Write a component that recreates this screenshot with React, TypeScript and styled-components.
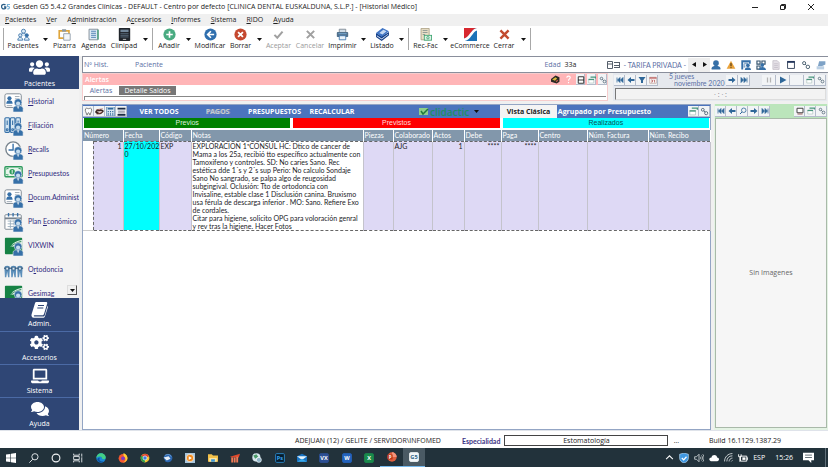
import React from "react";
import styled, { createGlobalStyle, css } from "styled-components";
import { FaUsers, FaCogs, FaLaptop, FaComments } from "react-icons/fa";

const GlobalStyle = createGlobalStyle`
  * { box-sizing: border-box; }
  body { margin: 0; background: #fff; }
  body, button, input {
    font-family: "Open Sans", "Noto Sans", sans-serif;
    font-size: 7px;
    line-height: 10px;
  }
  button { margin: 0; padding: 0; border: 0; background: none; color: inherit; white-space: nowrap; }
  svg { display: block; flex: none; }
`;

const navy = "#2f4675";
const steel = "#3670a8";
const label = "#5b70a5";
const narrow = `Lato, "Open Sans", sans-serif`;

/* ---------- layout ---------- */

const Window = styled.div`
  min-height: 100vh;
  display: flex;
  flex-direction: column;
  background: #fff;
  color: #222;
  overflow: hidden;
`;

const TitleBar = styled.header`
  height: 14px;
  display: flex;
  align-items: center;
  padding: 0 4px 0 1px;
  gap: 2px;
  white-space: nowrap;
`;

const Title = styled.h1`
  flex: 1;
  margin: 0;
  font-size: 7px;
  font-weight: 400;
  line-height: 12px;
`;

const WindowButton = styled.button`
  width: 26px;
  height: 12px;
  display: grid;
  place-items: center;
`;

const MenuBar = styled.nav`
  height: 12px;
  display: flex;
  align-items: center;
  gap: 10px;
  padding-left: 5px;
  background: #f0f0f0;
`;

const Toolbar = styled.div`
  height: 30px;
  display: flex;
  align-items: flex-start;
  padding: 2px 0 0 1px;
`;

const ToolButton = styled.button<{ $w: number }>`
  width: ${(p) => p.$w}px;
  display: flex;
  flex-direction: column;
  align-items: center;
  color: #222;
  &:disabled { color: #9a9a9a; }
`;

const ArrowButton = styled.button`
  width: 10px;
  height: 22px;
  display: grid;
  place-items: center;
`;

const Separator = styled.span`
  width: 1px;
  height: 22px;
  margin: 0 2px;
  background: #a8a8a8;
`;

const Body = styled.div`
  flex: 1;
  display: flex;
  background: #f0f0f0;
`;

const Sidebar = styled.aside`
  width: 79px;
  flex: none;
  display: flex;
  flex-direction: column;
  margin-right: 3px;
  background: #f3f3f3;
`;

const Section = styled.button`
  height: 33px;
  flex: none;
  display: flex;
  flex-direction: column;
  align-items: center;
  justify-content: center;
  gap: 1px;
  background: ${navy};
  color: #fff;
  font-size: 7px;
  & + & { border-top: 1px solid #4b6aa5; }
`;

const SideList = styled.div`
  flex: 1 1 0;
  min-height: 0;
  position: relative;
  overflow: hidden;
  display: flex;
  flex-direction: column;
`;

const SideItem = styled.a`
  height: 24px;
  flex: none;
  display: flex;
  align-items: center;
  gap: 4px;
  padding-left: 4px;
  color: #2f2a80;
  font-family: ${narrow};
  text-decoration: none;
  white-space: nowrap;
  svg { margin-top: 2px; }
`;

const ScrollDown = styled.button`
  position: absolute;
  right: 2px;
  bottom: 3px;
  width: 10px;
  height: 10px;
  display: grid;
  place-items: center;
  background: #f0f0f0;
  border: 1px solid;
  border-color: #ddd #555 #555 #ddd;
`;

const Main = styled.main`
  flex: 1;
  min-width: 0;
  display: flex;
  flex-direction: column;
`;

const PatientBar = styled.div`
  height: 17px;
  display: flex;
  align-items: center;
  padding: 0 2px 0 1px;
  background: #fff;
  border: 1px solid #8a8f9c;
  border-width: 1px 0 1px 1px;
  color: ${label};
  white-space: nowrap;
`;

const PatientId = styled.span`
  width: 51px;
`;

const Grow = styled.span`
  flex: 1;
`;

const Age = styled.span`
  margin-right: 30px;
  b { font-weight: 400; color: #222; margin-left: 2px; }
`;

const Rate = styled.span`
  margin: 0 2px 0 4px;
  font-family: ${narrow};
`;

const PatientTools = styled.div`
  display: flex;
  align-items: center;
  gap: 5px;
  margin-left: 1px;
`;

const Stepper = styled.div`
  display: flex;
  background: #eee;
  height: 14px;
  button { width: 11px; display: grid; place-items: center; }
`;

const MidRow = styled.div`
  display: flex;
  gap: 5px;
  height: 28px;
  margin-bottom: 3px;
`;

const AlertPanel = styled.section`
  flex: 1;
  display: flex;
  flex-direction: column;
  background: #fff;
  border: 1px solid #f6cccc;
`;

const AlertHead = styled.div`
  height: 11px;
  display: flex;
  align-items: center;
  gap: 2px;
  padding-left: 2px;
  background: #ffb5b7;
  color: #fff;
  font-weight: 600;
`;

const AlertTabs = styled.div`
  height: 11px;
  display: flex;
  align-items: flex-end;
`;

const AlertTab = styled.button<{ $dark?: boolean }>`
  width: ${(p) => (p.$dark ? 57 : 36)}px;
  height: 9px;
  line-height: 9px;
  color: ${(p) => (p.$dark ? "#fff" : label)};
  background: ${(p) => (p.$dark ? "#777" : "transparent")};
`;

const SunkenLine = styled.div`
  margin: 1px 1px 0;
  height: 4px;
  border: 1px solid #888;
  border-width: 1px 0 0 1px;
`;

const CalendarPanel = styled.section`
  width: 214px;
  margin-right: 1px;
  display: flex;
  flex-direction: column;
  background: #e6e9ee;
`;

const CalendarHead = styled.div`
  height: 14px;
  display: flex;
  align-items: center;
  padding: 0 1px;
`;

const DateText = styled.div`
  width: 68px;
  padding-left: 11px;
  font-family: ${narrow};
  line-height: 7px;
  color: ${label};
  white-space: nowrap;
  span { display: block; }
  span + span { padding-left: 5px; }
`;

const Gauge = styled.div`
  height: 12px;
  margin: 1px 1px 0 2px;
  border: 1px solid;
  border-color: #777 #ddd #ddd #777;
  background: #f3f3f3;
  color: #778;
  text-align: center;
  line-height: 11px;
`;

const IconButton = styled.button<{ $flat?: boolean; $w?: number }>`
  width: ${(p) => p.$w ?? 11}px;
  height: 11px;
  flex: none;
  display: grid;
  place-items: center;
  background: ${(p) => (p.$flat ? "transparent" : "#f2f4f6")};
  ${(p) =>
    !p.$flat &&
    css`
      box-shadow: inset -1px -1px #b4bccb;
    `}
`;

const Workspace = styled.div`
  flex: 1;
  display: flex;
  gap: 3px;
`;

const HistoryPanel = styled.section`
  flex: 1;
  min-width: 0;
  display: flex;
  flex-direction: column;
  background: #fff;
  border: 1px solid #93a5c4;
`;

const BlueBar = styled.div`
  height: 13px;
  flex: none;
  display: flex;
  align-items: center;
  background: #4c74bd;
  color: #fff;
  font-weight: 700;
`;

const BarAction = styled.button<{ $w: number; $dim?: boolean }>`
  width: ${(p) => p.$w}px;
  height: 12px;
  font-weight: 700;
  color: ${(p) => (p.$dim ? "#c3cad6" : "#fff")};
  ${(p) => p.$dim && "text-shadow: 1px 0 #8d98ab;"}
`;

const Clidactic = styled.button`
  width: 81px;
  height: 12px;
  display: flex;
  align-items: center;
  gap: 1px;
  margin-left: 60px;
  color: #1c8f62;
  font-size: 10px;
  line-height: 12px;
  font-weight: 600;
  svg:last-child { margin-left: 4px; }
`;

const ViewTab = styled.button<{ $active?: boolean; $w: number }>`
  width: ${(p) => p.$w}px;
  height: 13px;
  font-weight: 700;
  color: ${(p) => (p.$active ? "#222" : "#fff")};
  background: ${(p) => (p.$active ? "#f4f4f4" : "transparent")};
`;

const Bands = styled.div`
  display: grid;
  grid-template-columns: 1fr 1fr 1fr;
  gap: 3px;
  padding: 0 1px;
  margin-bottom: 2px;
`;

const Band = styled.div<{ $bg: string; $fg: string }>`
  height: 10px;
  line-height: 10px;
  text-align: center;
  font-family: "Liberation Sans", sans-serif;
  background: ${(p) => p.$bg};
  color: ${(p) => p.$fg};
`;

const Table = styled.table`
  width: 100%;
  table-layout: fixed;
  border-collapse: collapse;
  font-family: ${narrow};
`;

const Th = styled.th`
  height: 11px;
  padding: 0 0 0 1px;
  overflow: hidden;
  text-align: left;
  font-weight: 400;
  line-height: 10px;
  white-space: nowrap;
  background: #8297ab;
  color: #fff;
  border-right: 1px solid #fff;
`;

const Td = styled.td<{ $bg?: string; $right?: boolean; $plain?: boolean }>`
  height: 89px;
  padding: 0 1px;
  vertical-align: top;
  line-height: 8px;
  color: #1c1c28;
  white-space: nowrap;
  text-align: ${(p) => (p.$right ? "right" : "left")};
  background: ${(p) => p.$bg ?? "#ded9f5"};
  border-right: 1px solid #c4c3cc;
  border-top: 1px dashed #666;
  border-bottom: 1px dashed #666;
  ${(p) => p.$plain && "border-top: 0; border-right: 1px dashed #666; border-bottom: 1px solid #ccc;"}
`;

const NoteLine = styled.span`
  display: block;
`;

const ImagePanel = styled.section`
  width: 114px;
  display: flex;
  flex-direction: column;
  padding: 0 1px 2px 1px;
  background: #e4f3e4;
`;

const GreenBar = styled.div`
  height: 14px;
  display: flex;
  align-items: center;
  background: #bbe5bb;
`;

const ImageBox = styled.div`
  flex: 1;
  display: grid;
  place-items: center;
  background: #f6f6f6;
  border: 1px solid #a9b9a9;
  color: #666;
`;

const StatusBar = styled.footer`
  height: 18px;
  display: flex;
  align-items: center;
  padding: 2px 47px 0 295px;
  border-top: 1px solid #dfe3ea;
  white-space: nowrap;
`;

const SpecialtyLabel = styled.label`
  margin: 0 4px 0 21px;
  color: #3c3484;
  font-family: ${narrow};
  font-weight: 700;
`;

const SpecialtyInput = styled.input`
  flex: 0 1 164px;
  min-width: 0;
  height: 11px;
  padding: 0;
  border: 1px solid #444;
  border-radius: 0;
  text-align: center;
  color: #222;
  background: #fff;
`;

const Taskbar = styled.div`
  height: 19px;
  display: flex;
  align-items: stretch;
  background: #22323b;
  color: #fff;
`;

const Apps = styled.div`
  width: 425px;
  display: flex;
`;

const App = styled.button<{ $open?: boolean; $active?: boolean }>`
  flex: 1;
  display: grid;
  place-items: center;
  background: ${(p) => (p.$active ? "#4a5a64" : "transparent")};
  border-bottom: ${(p) => (p.$open || p.$active ? "1px solid #76b9ed" : "0")};
`;

const Tray = styled.div`
  display: flex;
  align-items: center;
  gap: 5px;
  padding-right: 2px;
`;

const Clock = styled.time`
  margin: 0 5px 0 5px;
`;

const DeskEdge = styled.span`
  width: 1px;
  height: 19px;
  margin-left: 6px;
  background: #61707a;
`;

/* ---------- icons ---------- */

type IconProps = { s?: number; children: React.ReactNode };
const Icon = ({ s = 12, children }: IconProps) => (
  <svg width={s} height={s} viewBox="0 0 16 16" fill="none" aria-hidden="true">
    {children}
  </svg>
);

const Caret = ({ color = "#111" }: { color?: string }) => (
  <svg width="5" height="3" viewBox="0 0 5 3" aria-hidden="true">
    <path d="M0 0h5L2.500 3z" fill={color} />
  </svg>
);

const SmallPerson = () => (
  <g stroke="#f3f3f3" strokeWidth=".6">
    <path d="M10 22v-4c0-2 2-3 5.500-3s5.500 1 5.500 3v4z" fill={steel} />
    <circle cx="15.500" cy="11.500" r="4.200" fill={steel} />
    <circle cx="15.500" cy="12.700" r="2.300" fill="#c5dcee" stroke="none" />
    <path d="M14.500 16l1 3 1-3z" fill="#fff" stroke="none" />
  </g>
);

const SideIcon = ({ children, bare }: { children: React.ReactNode; bare?: boolean }) => (
  <svg width="20" height="20" viewBox="0 0 22 22" fill="none" aria-hidden="true">
    {children}
    {!bare && <SmallPerson />}
  </svg>
);

const cardArt = (
  <>
    <rect x="1" y="2" width="18" height="15" rx="2" fill="#fff" stroke="#77838d" />
    <circle cx="6" cy="7" r="2.300" fill={steel} />
    <path d="M2.500 13c0-3 1.500-4 3.500-4s3.500 1 3.500 4z" fill={steel} />
    <path d="M12 5h5M12 7.500h5M3 15h6" stroke="#9aa6b0" />
  </>
);
const bindersArt = (
  <g fill="#d6e7f3" stroke={steel} strokeWidth="1.200">
    <rect x="1" y="2" width="5" height="16" rx="1" />
    <rect x="7" y="2" width="5" height="16" rx="1" />
    <rect x="13" y="2" width="5" height="16" rx="1" />
    <path d="M3.500 5v5M9.500 5v5M15.500 5v5" />
    <circle cx="3.500" cy="15" r="1" />
    <circle cx="9.500" cy="15" r="1" />
  </g>
);
const clockArt = (
  <>
    <circle cx="10" cy="10" r="8" fill="#fff" stroke="#77838d" strokeWidth="1.500" />
    <path d="M10 4v7H5" stroke={steel} strokeWidth="1.500" />
  </>
);
const cashArt = (
  <>
    <rect x="1" y="3" width="19" height="11" rx="1" fill="#e8f5ec" stroke="#2d9a5c" strokeWidth="1.500" />
    <circle cx="9" cy="8.500" r="3" fill="#2d9a5c" />
    <path d="M9 6.500v4" stroke="#fff" />
    <path d="M3 6v-1h2M18 6v-1h-2M3 11v1h2" stroke="#2d9a5c" />
  </>
);
const planArt = (
  <>
    <rect x="1" y="3" width="18" height="16" rx="1" fill="#fff" stroke="#77838d" />
    <path d="M1 7h18" stroke="#77838d" strokeWidth="2" />
    <path d="M5 1v4M10 1v4M15 1v4" stroke={steel} strokeWidth="1.500" />
    <path d="M4 10h10M4 13h7M4 16h7M7 9v9M11 9v6" stroke="#9db0bf" />
  </>
);
const greenArt = (
  <>
    <rect x="1" y="2" width="19" height="18" rx="1" fill="#168245" />
    <path d="M7 12C9 8 14 5 20 4v6z" fill="#fff" opacity=".85" />
    <path d="M5 15C8 10 12 8 19 6" stroke="#168245" />
  </>
);
const teethArt = (
  <>
    <g fill="#5c8fba">
      {[0, 7, 14].map((x) => (
        <path key={x} d={`M${x + 1} 7c1-1 4-1 5 0 1 3 0 5 0 12h-1.500l-1-6-1 6H${x + 1}c0-7-1-9 0-12z`} />
      ))}
    </g>
    <path d="M0 9h21" stroke="#2b5277" strokeWidth="1.200" />
    <path d="M2 8h3v3H2zM9 8h3v3H9zM16 8h3v3h-3z" stroke="#2b5277" fill="#dceaf5" strokeWidth=".7" />
  </>
);

const BookIcon = () => (
  <svg width="17" height="17" viewBox="0 0 17 17" fill="none" aria-hidden="true">
    <path d="M5.500 1h9.500c1 0 1.500.700 1.200 1.600L13 13c-.300.900-.900 1.300-1.800 1.300H3.500c-1 0-1 1.200 0 1.200h9c.600 0 1-.300 1.200-.900L16.500 5c.500.300.500.800.300 1.400l-2.900 9c-.300.900-1 1.400-2 1.400H3C1 17 0 15 .600 13.300L4 2.200C4.300 1.400 4.700 1 5.500 1z" fill="#fff" />
    <path d="M7 4.500h6M6.300 7h6" stroke={navy} strokeWidth="1.200" />
  </svg>
);

const toolArt: Record<string, React.ReactNode> = {
  pacientes: (
    <g fill="#dceaf5" stroke={steel}>
      <circle cx="8" cy="4" r="2.500" />
      <path d="M4.500 10c0-2 1-3.500 3.500-3.500S11.500 8 11.500 10" />
      <circle cx="4" cy="9" r="2" />
      <circle cx="12" cy="9" r="2" fill={steel} />
      <path d="M1 15c0-2 1-3.500 3-3.500S7 13 7 15zM9 15c0-2 1-3.500 3-3.500s3 1.500 3 3.500z" />
    </g>
  ),
  pizarra: (
    <>
      <path d="M1.500 3.500h12v9h-12z" fill="#fff" stroke="#e0a63c" strokeWidth="2" />
      <path d="M5 1.500h5v3H5z" fill="#8d9aa5" />
      <path d="M7 7h8v8H7z" fill="#f4f7fa" stroke="#8795a3" />
    </>
  ),
  agenda: (
    <>
      <path d="M2.500 1.500h11v13h-11z" fill="#dceaf5" stroke="#77838d" />
      <path d="M5 4h6M5 6.500h6M5 9h6M5 11.500h6" stroke={steel} />
      <path d="M13.500 2v12" stroke="#52a384" strokeWidth="2" />
    </>
  ),
  clinipad: (
    <>
      <rect x="1" y="0" width="14" height="16" rx="1" fill="#20252b" />
      <path d="M3 2h10v3H3z" fill="#72879a" />
      <path d="M3 7h10M3 9h10M3 11h10" stroke="#5f7486" />
      <path d="M6 14h4" stroke="#ddd" />
    </>
  ),
  add: (
    <>
      <circle cx="8" cy="8" r="7.500" fill="#49ab81" />
      <path d="M8 4v8M4 8h8" stroke="#fff" strokeWidth="2" />
    </>
  ),
  modify: (
    <>
      <circle cx="8" cy="8" r="7.500" fill="#2f6fae" />
      <path d="M12.500 8H5M8.500 4L4.500 8l4 4" stroke="#fff" strokeWidth="2" />
    </>
  ),
  remove: (
    <>
      <circle cx="8" cy="8" r="7.500" fill="#c5482f" />
      <path d="M5 5l6 6M11 5l-6 6" stroke="#fff" strokeWidth="2.200" />
    </>
  ),
  accept: <path d="M3 8.500l3.500 3.500L13 4.500" stroke="#a0a0a0" strokeWidth="2.500" />,
  cancel: <path d="M3.500 3.500l9 9M12.500 3.500l-9 9" stroke="#a0a0a0" strokeWidth="2.500" />,
  print: (
    <>
      <path d="M4 1.500h8V6H4z" fill="#cfdbe5" stroke="#77838d" />
      <rect x="1" y="5" width="14" height="6" rx="1" fill="#52718c" />
      <path d="M3 7h10" stroke="#7db4e0" />
      <path d="M4 9.500h8v5H4z" fill="#e9f2fa" stroke={steel} />
    </>
  ),
  list: (
    <>
      <path d="M0 6l7 4 9-5v4l-9 7-7-5z" fill="#123d86" />
      <path d="M1 9l6 4 8-6v1l-8 6-6-4z" fill="#dfe9f6" />
      <path d="M0 6l8-6 8 4-9 7z" fill="#3f74c4" />
      <path d="M4 6l5-4 4 2-5 4z" fill="#c6d9f2" />
    </>
  ),
  recfac: (
    <>
      <path d="M2.500.5h10v14h-10z" fill="#e9dfc6" stroke="#a79c80" />
      <path d="M4.500 3h6M4.500 5.500h6M4.500 8h3" stroke="#7d8c8c" />
      <rect x="6.500" y="9" width="9" height="6" fill="#dff3e8" stroke="#37a26c" />
      <circle cx="11" cy="12" r="1.500" stroke="#37a26c" />
    </>
  ),
  ecommerce: (
    <>
      <path d="M0 0h16v16H0z" fill="#1c72b8" />
      <path d="M0 0h16C8 2 8 11 0 13z" fill="#d8282f" />
      <path d="M0 13C7 11 8 2 16 0v3C10 5 9 14 1 16H0z" fill="#fff" />
    </>
  ),
  close: <path d="M3 3l10 10M13 3L3 13" stroke="#c24a2e" strokeWidth="3" />,
};

const blue = "#2f6799";
const navArt: Record<string, React.ReactNode> = {
  first: <path d="M2 3v10M8 3L3 8l5 5zM14 3L9 8l5 5z" fill={blue} stroke={blue} strokeWidth="1.500" />,
  last: <path d="M14 3v10M8 3l5 5-5 5zM2 3l5 5-5 5z" fill={blue} stroke={blue} strokeWidth="1.500" />,
  prev: <path d="M1 8l7-6v4h7v4H8v4z" fill={blue} />,
  next: <path d="M15 8L8 2v4H1v4h7v4z" fill={blue} />,
  down: <path d="M1 2h14l-5 7v5H6V9z" fill={blue} />,
  cal: (
    <>
      <path d="M1.500 2.500h13v12h-13z" fill="#fff" stroke="#a07c70" />
      <path d="M1 4h14" stroke="#b55" strokeWidth="2.500" />
      <path d="M4 8h3v4H4M9 8h2v5" stroke="#a44" strokeWidth="1.300" />
    </>
  ),
  pause: <path d="M5 3v10M11 3v10" stroke="#b4b4b4" strokeWidth="2.500" />,
  play: <path d="M2 1l13 7-13 7z" fill={blue} />,
  blank: null,
  restore: (
    <>
      <path d="M5 2h10v3" stroke="#48957c" strokeWidth="2.500" />
      <path d="M1.500 14V6.500h10V14z" fill="#fff" stroke="#9bb5ad" />
      <path d="M1 7h11" stroke="#48957c" strokeWidth="2.500" />
    </>
  ),
  link: (
    <g stroke="#536877" strokeWidth="1.600">
      <circle cx="5" cy="5" r="2.500" />
      <circle cx="11" cy="11" r="2.800" />
      <path d="M6.500 6.500L9 9" />
    </g>
  ),
  search: (
    <>
      <circle cx="9.500" cy="6.500" r="4.500" stroke={blue} strokeWidth="1.600" />
      <path d="M6 10l-4 4" stroke={blue} strokeWidth="2" />
    </>
  ),
  screen: (
    <>
      <path d="M2 2.500h12v9H2z" fill="#fff" stroke="#444" strokeWidth="2" />
      <path d="M3 14h10" stroke="#9a5e5e" strokeWidth="2" />
    </>
  ),
  split: <path d="M2.500 1.500h11v13h-11zM2 8h12" fill="#fff" stroke="#222" strokeWidth="1.800" />,
  tag: (
    <>
      <path d="M0 7l8-6 7 3v8l-5 3-10-3z" fill="#2a2a24" />
      <path d="M2 8l6-4 3 2-4 4z" fill="#d8b53c" />
      <path d="M9 12l3-3" stroke="#c4574a" strokeWidth="2" />
    </>
  ),
  tooth: <path d="M3 3c2-2 3 0 5 0s3-2 5 0c2 4-1 6-2 11-2 1-1-4-3-4s-1 5-3 4C4 9 1 7 3 3z" fill="#fff" stroke="#555" strokeWidth="1.300" />,
  mouth: (
    <>
      <path d="M0 9c3-6 5-6 8-4 3-2 5 0 8 2-3 6-12 9-16 2z" fill="#3a2724" />
      <path d="M3 8l10-1-4 4z" fill="#f3e4e0" />
      <path d="M2 5L14 3M3 13l10-4" stroke="#a04b42" />
    </>
  ),
  calc: (
    <>
      <path d="M1 0h14v16H1z" fill="#dceaf5" stroke={blue} />
      <path d="M3 3h10" stroke={blue} strokeWidth="3" />
      <path d="M4 7v8M8 7v8M12 7v8" stroke={blue} strokeWidth="2" strokeDasharray="2 1" />
    </>
  ),
  sheet: (
    <>
      <path d="M1 1h14v14H1z" fill="#e9edf2" />
      <path d="M1 3h14M1 14h14" stroke="#1c2c44" strokeWidth="3" />
      <path d="M2 7.500h12M2 10.500h12" stroke="#556" />
    </>
  ),
  user: (
    <g fill={steel}>
      <path d="M1 15v-2c0-2.500 3-3.500 7-3.500s7 1 7 3.500v2z" />
      <circle cx="8" cy="5" r="4.500" />
    </g>
  ),
  warn: (
    <>
      <path d="M8 1l7 13H1z" fill="#e9a23b" />
      <path d="M8 5v5M8 11.500v1.500" stroke="#3a2a10" strokeWidth="1.600" />
    </>
  ),
  userDoc: (
    <>
      <path d="M2 15V2h12v4" stroke={steel} strokeWidth="3" />
      <path d="M5 5h6M4 8h3M4 11h3" stroke={steel} strokeWidth="1.500" />
      <circle cx="11" cy="8.500" r="3" fill={steel} />
      <path d="M6 16c0-3 2-4.500 5-4.500s5 1.500 5 4.500z" fill={steel} />
    </>
  ),
  userQr: (
    <>
      <path d="M1.500 1.500h5v5h-5zM9.500 1.500h5v5h-5zM1.500 9.500h5v5h-5z" stroke="#33536e" strokeWidth="1.800" />
      <circle cx="10" cy="8" r="3" fill={steel} />
      <path d="M5 16c0-3 2-5 5-5s6 2 6 5z" fill={steel} />
    </>
  ),
  note: (
    <>
      <path d="M3 1h7l3 3v11H3z" fill="#e4e0e6" stroke="#b9b2bd" />
      <path d="M5 6h6M5 9h6M5 12h6" stroke="#b9b2bd" />
    </>
  ),
  win: (
    <>
      <path d="M2.500 2.500h11v11h-11z" fill="#fff" stroke="#33435c" strokeWidth="1.500" />
      <path d="M2 3h12" stroke="#22345a" strokeWidth="3" />
    </>
  ),
  card: (
    <>
      <path d="M5 2h10v5L9 10H3z" fill="#7ea2c6" />
      <path d="M1 10h12v5H1z" fill="#bcd0e4" />
    </>
  ),
  help: <path d="M5 5c0-4 7-4 6 0 0 2-3 2-3 5M8 12.500v2" stroke="#fff" strokeWidth="2" />,
};

const Nav = ({ names, w, flat, s = 8 }: { names: string[]; w?: number; flat?: boolean; s?: number }) => (
  <>
    {names.map((n, i) => (
      <IconButton key={n + i} $w={w} $flat={flat} aria-label={n}>
        <Icon s={s}>{navArt[n]}</Icon>
      </IconButton>
    ))}
  </>
);

const badge = (bg: string, text: string, fg = "#fff", edge = bg) => (
  <>
    <rect x="1" y="1" width="14" height="14" rx="1.500" fill={bg} stroke={edge} strokeWidth="1.500" />
    <text x="8" y="11.500" fontSize="9" fontWeight="700" textAnchor="middle" fill={fg}>
      {text}
    </text>
  </>
);

const apps: { name: string; art: React.ReactNode; open?: boolean; active?: boolean }[] = [
  { name: "Inicio", art: <path d="M0 2.500l7-1v6H0zM8 1.300L16 0v7.500H8zM0 8.500h7v6l-7-1zM8 8.500h8V16l-8-1.200z" fill="#fff" /> },
  {
    name: "Buscar",
    art: (
      <g stroke="#e8ecee" strokeWidth="1.500">
        <circle cx="9.500" cy="6" r="5" />
        <path d="M6 10l-5.500 5.500" />
      </g>
    ),
  },
  { name: "Cortana", art: <circle cx="8" cy="8" r="6.200" stroke="#f2f4f5" strokeWidth="1.800" /> },
  { name: "Vista de tareas", art: <path d="M1 1v2.500h9V1M1 15v-2.500h9V15M1 5.500h9v5H1zM14 1v4M14 8v7M13 6.500h2" stroke="#e8ecee" strokeWidth="1.400" /> },
  {
    name: "Edge",
    art: (
      <>
        <circle cx="8" cy="8" r="7.500" fill="#1b87d6" />
        <path d="M.500 8C1 3 4 .500 8 .500c5 0 8 4 7.500 7-.500 3-5 3-6 1C10 6 6 4 .500 8z" fill="#43cf86" />
        <path d="M6 8c-2 4 2 7 7 5-4 4-11 2-11-3 1-2 3-3 4-2z" fill="#0d52a0" />
      </>
    ),
  },
  {
    name: "Firefox",
    art: (
      <>
        <circle cx="8" cy="8.500" r="7" fill="#f4562f" />
        <path d="M9 0c5 2 7 6 6 10-1 3-4 5-7 5 4-2 5-5 3-8C9 5 8 3 9 0z" fill="#ffc934" />
        <circle cx="8" cy="8.500" r="3" fill="#7a3bc8" />
      </>
    ),
  },
  {
    name: "Chrome",
    art: (
      <>
        <circle cx="8" cy="8" r="7" fill="#f4c430" />
        <path d="M8 8L2 4.500C4 1 12 0 14.500 5z" fill="#df4334" />
        <path d="M8 8L2 4.500C-.500 9 3 15 8 15z" fill="#2ba24c" />
        <circle cx="8" cy="8" r="3.300" fill="#3d7de0" stroke="#fff" />
      </>
    ),
  },
  {
    name: "Thunderbird",
    art: (
      <>
        <path d="M1 8c0-8 13-9 14-1 0 7-7 9-11 7z" fill="#2a66b0" />
        <path d="M1 7l8-2 3 4-6 3z" fill="#e8eef6" />
        <path d="M3 4c4-3 9-2 10 2" stroke="#8cb8e6" />
      </>
    ),
  },
  {
    name: "Reproductor",
    art: (
      <>
        <path d="M0 0h16v16H0z" fill="#a8c6dd" />
        <circle cx="8" cy="8" r="6" fill="#f08a1d" stroke="#fff" />
        <path d="M6 5l5 3-5 3z" fill="#fff" />
      </>
    ),
  },
  {
    name: "Explorador",
    art: (
      <>
        <path d="M0 2h6l2 2h8v10H0z" fill="#f2c14a" />
        <path d="M2 8h12v6H2z" fill="#fbe6a2" />
        <path d="M5 10h6v4H5z" fill="#3b97d8" />
      </>
    ),
  },
  {
    name: "Clínica",
    art: (
      <>
        <path d="M0 6L16 1l-2 6H2z" fill="#e0492c" />
        <path d="M2 7h3v8H2zM6 7h3v8H6zM10 6h3v9h-3z" fill="#f07b57" />
      </>
    ),
  },
  {
    name: "Navegador",
    art: (
      <>
        <circle cx="7" cy="7" r="6.500" fill="#d7e7ee" />
        <path d="M2 4l5-2 3 4-5 3z" fill="#4b9b6a" />
        <circle cx="11" cy="11" r="4" fill="#8fb4c8" stroke="#fff" />
      </>
    ),
  },
  { name: "Photoshop", art: badge("#071c2c", "Ps", "#39a8f5", "#2b86c5") },
  {
    name: "Correo",
    art: (
      <>
        <path d="M0 5l8-4 8 4v9H0z" fill="#1673c4" />
        <path d="M0 5h16l-8 6z" fill="#e9f5fd" />
        <path d="M0 14l8-5 8 5z" fill="#37a9ec" />
      </>
    ),
  },
  { name: "VixWin", art: badge("#2d4f93", "VX") },
  { name: "Word", art: badge("#2363bd", "W") },
  { name: "Excel", art: badge("#1a8a4c", "X") },
  {
    name: "PowerPoint",
    open: true,
    art: (
      <>
        <circle cx="8" cy="8" r="7.500" fill="#e0603f" />
        <path d="M8 .500A7.500 7.500 0 0 1 15.500 8H8z" fill="#f4937a" />
        <rect x="1" y="4" width="8" height="8" fill="#b83418" />
        <text x="5" y="10.500" fontSize="7" fontWeight="700" textAnchor="middle" fill="#fff">P</text>
      </>
    ),
  },
  { name: "Gesden", active: true, art: badge("#f2f6f9", "G5", "#2c6286") },
];

const GesdenMark = () => (
  <svg width="10" height="8" viewBox="0 0 10 8" fill="none" aria-hidden="true">
    <path d="M4.500 2A2.300 2.300 0 1 0 4.700 5V4H3" stroke="#2c5f88" strokeWidth="1.300" />
    <path d="M9 1.500H6.500V3.500C9 3 9.500 6 6.200 6" stroke="#7ab3d8" strokeWidth="1.200" />
  </svg>
);

/* ---------- data ---------- */

const menus: [string, string, string][] = [
  ["", "P", "acientes"],
  ["", "V", "er"],
  ["A", "d", "ministración"],
  ["A", "c", "cesorios"],
  ["", "I", "nformes"],
  ["", "S", "istema"],
  ["", "R", "IDO"],
  ["", "A", "yuda"],
];

type Tool = { text: string; art: string; w: number; arrow?: boolean; sep?: boolean; off?: boolean };
const tools: Tool[] = [
  { text: "Pacientes", art: "pacientes", w: 34, arrow: true },
  { text: "Pizarra", art: "pizarra", w: 29 },
  { text: "Agenda", art: "agenda", w: 29 },
  { text: "Clinipad", art: "clinipad", w: 32, arrow: true, sep: true },
  { text: "Añadir", art: "add", w: 28, arrow: true },
  { text: "Modificar", art: "modify", w: 34 },
  { text: "Borrar", art: "remove", w: 27, arrow: true },
  { text: "Aceptar", art: "accept", w: 29, off: true },
  { text: "Cancelar", art: "cancel", w: 34, off: true },
  { text: "Imprimir", art: "print", w: 31, arrow: true },
  { text: "Listado", art: "list", w: 28, arrow: true, sep: true },
  { text: "Rec-Fac", art: "recfac", w: 29, arrow: true },
  { text: "eCommerce", art: "ecommerce", w: 40 },
  { text: "Cerrar", art: "close", w: 28, arrow: true, sep: true },
];

const sideItems: { t: [string, string, string]; art: React.ReactNode; bare?: boolean }[] = [
  { t: ["", "H", "istorial"], art: cardArt },
  { t: ["", "F", "iliación"], art: bindersArt },
  { t: ["", "R", "ecalls"], art: clockArt },
  { t: ["", "P", "resupuestos"], art: cashArt },
  { t: ["", "D", "ocum.Administ"], art: cardArt },
  { t: ["Plan ", "E", "conómico"], art: planArt },
  { t: ["VIXWIN", "", ""], art: greenArt },
  { t: ["O", "r", "todoncia"], art: teethArt, bare: true },
  { t: ["Gesimag", "", ""], art: greenArt },
];

const sections: [string, React.ReactNode][] = [
  ["Admin.", <BookIcon />],
  ["Accesorios", <FaCogs size={19} />],
  ["Sistema", <FaLaptop size={18} />],
  ["Ayuda", <FaComments size={18} />],
];

const columns = [10, 30, 36, 32, 172, 30, 39, 32, 37, 37, 49, 61, 62];
const headers = ["Número", "Fecha", "Código", "Notas", "Piezas", "Colaborado", "Actos", "Debe", "Paga", "Centro", "Núm. Factura", "Núm. Recibo"];

const notes = [
  "EXPLORACION 1ªCONSUL HC: Dtico de cancer de",
  "Mama a los 25a, recibió tto específico actualmente con",
  "Tamoxifeno y controles. SD: No caries Sano. Rec",
  "estética dde 1´s y 2´s sup Perio: No calculo Sondaje",
  "Sano No sangrado, se palpa algo de reugosidad",
  "subgingival. Oclusión: Tto de ortodoncia con",
  "Invisaline, estable clase 1 Disclusión canina. Bruxismo",
  "usa férula de descarga inferior . MO: Sano. Refiere Exo",
  "de cordales.",
  "Citar para higiene, solicito OPG para voloración genral",
  "y rev tras la higiene. Hacer Fotos",
];

const Accel = ({ t }: { t: [string, string, string] }) => (
  <span>
    {t[0]}
    {t[1] && <u>{t[1]}</u>}
    {t[2]}
  </span>
);

/* ---------- page ---------- */

export default function GesdenWindow() {
  return (
    <Window>
      <GlobalStyle />
      <TitleBar>
        <GesdenMark />
        <Title>Gesden G5 5.4.2 Grandes Clínicas - DEFAULT - Centro por defecto [CLINICA DENTAL EUSKALDUNA, S.L.P.] - [Historial Médico]</Title>
        <WindowButton aria-label="Minimizar">
          <svg width="6" height="6" viewBox="0 0 6 6"><path d="M0 3.500h6" stroke="#222" /></svg>
        </WindowButton>
        <WindowButton aria-label="Restaurar">
          <svg width="6" height="6" viewBox="0 0 6 6" fill="none"><path d="M.5 1.500h4v4h-4zM1.500 1V.5h4v4H5" stroke="#222" /></svg>
        </WindowButton>
        <WindowButton aria-label="Cerrar">
          <svg width="6" height="6" viewBox="0 0 6 6"><path d="M0 0l6 6M6 0L0 6" stroke="#222" /></svg>
        </WindowButton>
      </TitleBar>
      <MenuBar>
        {menus.map((m) => (
          <button key={m.join("")}><Accel t={m} /></button>
        ))}
      </MenuBar>
      <Toolbar>
        <Separator />
        {tools.map((t) => (
          <React.Fragment key={t.text}>
            <ToolButton $w={t.w} disabled={t.off}>
              <Icon s={13}>{toolArt[t.art]}</Icon>
              {t.text}
            </ToolButton>
            {t.arrow && <ArrowButton aria-label={`Opciones de ${t.text}`}><Caret /></ArrowButton>}
            {t.sep && <Separator />}
          </React.Fragment>
        ))}
      </Toolbar>

      <Body>
        <Sidebar>
          <Section><FaUsers size={21} />Pacientes</Section>
          <SideList>
            {sideItems.map((i) => (
              <SideItem href="#" key={i.t.join("")}>
                <SideIcon bare={i.bare}>{i.art}</SideIcon>
                <Accel t={i.t} />
              </SideItem>
            ))}
            <ScrollDown aria-label="Bajar"><Caret /></ScrollDown>
          </SideList>
          {sections.map(([name, icon]) => (
            <Section key={name}>{icon}{name}</Section>
          ))}
        </Sidebar>

        <Main>
          <PatientBar>
            <PatientId>Nº Hist.</PatientId>
            <span>Paciente</span>
            <Grow />
            <Age>Edad <b>33a</b></Age>
            <svg width="13" height="8" viewBox="0 0 13 8" fill="none" aria-hidden="true">
              <path d="M.5.5h5v7h-5zM1 3h4M7 1.500h5.500M7 4.500h5.500M12.500 1v6M7 6.500h5" stroke="#555e6a" />
            </svg>
            <Rate>- TARIFA PRIVADA -</Rate>
            <Stepper>
              <button aria-label="Anterior"><svg width="4" height="5" viewBox="0 0 4 5"><path d="M4 0v5L0 2.500z" fill="#111" /></svg></button>
              <button aria-label="Siguiente"><svg width="4" height="5" viewBox="0 0 4 5"><path d="M0 0v5l4-2.500z" fill="#111" /></svg></button>
            </Stepper>
            <PatientTools>
              <Nav names={["user", "warn", "userDoc", "userQr", "note", "win", "link", "card"]} w={10} flat s={10} />
            </PatientTools>
          </PatientBar>

          <MidRow>
            <AlertPanel>
              <AlertHead>
                Alertas
                <Grow />
                <Nav names={["tag", "help"]} flat s={9} />
                <Nav names={["split", "restore", "link"]} w={9} s={8} />
              </AlertHead>
              <AlertTabs>
                <AlertTab>Alertas</AlertTab>
                <AlertTab $dark>Detalle Saldos</AlertTab>
              </AlertTabs>
              <SunkenLine />
            </AlertPanel>
            <CalendarPanel>
              <CalendarHead>
                <Nav names={["first", "prev", "down", "cal"]} w={11} />
                <DateText><span>5 jueves</span><span>noviembre 2020</span></DateText>
                <Nav names={["next", "last"]} w={12} />
                <Grow />
                <Nav names={["pause", "play", "blank"]} w={14} />
                <Nav names={["restore", "link"]} w={11} />
              </CalendarHead>
              <Gauge>· : · :</Gauge>
            </CalendarPanel>
          </MidRow>

          <Workspace>
            <HistoryPanel>
              <BlueBar>
                <Nav names={["tooth", "mouth", "calc", "sheet"]} w={11} s={9} />
                <BarAction $w={64}>VER TODOS</BarAction>
                <BarAction $w={53} $dim>PAGOS</BarAction>
                <BarAction $w={61}>PRESUPUESTOS</BarAction>
                <BarAction $w={54}>RECALCULAR</BarAction>
                <Clidactic>
                  <svg width="10" height="9" viewBox="0 0 10 9" fill="none" aria-hidden="true">
                    <path d="M0 1h9v7H0z" fill="#8fce8a" />
                    <path d="M2 4l2 3 5-5" stroke="#1f7a3c" strokeWidth="1.500" />
                  </svg>
                  <span>clidactic</span>
                  <Caret />
                </Clidactic>
                <ViewTab $active $w={57}>Vista Clásica</ViewTab>
                <ViewTab $w={95}>Agrupado por Presupuesto</ViewTab>
                <Grow />
                <Nav names={["restore", "link"]} w={11} s={9} />
              </BlueBar>
              <Bands>
                <Band $bg="#008000" $fg="#dff0df">Previos</Band>
                <Band $bg="#ff0000" $fg="#ffdede">Previstos</Band>
                <Band $bg="#00ffff" $fg="#0b4f55">Realizados</Band>
              </Bands>
              <Table>
                <colgroup>
                  {columns.map((w, i) => <col key={i} width={w} />)}
                </colgroup>
                <thead>
                  <tr>
                    {headers.map((h, i) => <Th key={h} colSpan={i === 0 ? 2 : 1}>{h}</Th>)}
                  </tr>
                </thead>
                <tbody>
                  <tr>
                    <Td $bg="#fff" $plain />
                    <Td $right>1</Td>
                    <Td $bg="#00ffff">27/10/202<br />0</Td>
                    <Td>EXP</Td>
                    <Td $bg="#fff">{notes.map((n) => <NoteLine key={n}>{n}</NoteLine>)}</Td>
                    <Td />
                    <Td>AJG</Td>
                    <Td $right>1</Td>
                    <Td $right>****</Td>
                    <Td $right>****</Td>
                    <Td />
                    <Td />
                    <Td />
                  </tr>
                </tbody>
              </Table>
            </HistoryPanel>
            <ImagePanel>
              <GreenBar>
                <Nav names={["first", "prev", "search", "next", "last"]} w={11} />
                <Grow />
                <Nav names={["screen", "restore", "link"]} w={11} />
              </GreenBar>
              <ImageBox>Sin Imagenes</ImageBox>
            </ImagePanel>
          </Workspace>
        </Main>
      </Body>

      <StatusBar>
        <span>ADEJUAN (12) / GELITE / SERVIDOR\INFOMED</span>
        <SpecialtyLabel htmlFor="especialidad">Especialidad</SpecialtyLabel>
        <SpecialtyInput id="especialidad" size={1} defaultValue="Estomatología" />
        <IconButton $flat $w={16} aria-label="Elegir especialidad">...</IconButton>
        <Grow />
        <span>Build 16.1129.1387.29</span>
      </StatusBar>

      <Taskbar>
        <Apps>
          {apps.map((a) => (
            <App key={a.name} aria-label={a.name} $open={a.open} $active={a.active}>
              <Icon s={10}>{a.art}</Icon>
            </App>
          ))}
        </Apps>
        <Grow />
        <Tray>
          <Icon s={9}><path d="M2 11l6-6 6 6" stroke="#fff" strokeWidth="1.800" /></Icon>
          <Icon s={10}>
            <path d="M8 0l7 2v6c0 4-3 7-7 8-4-1-7-4-7-8V2z" fill="#3f97e0" stroke="#bfe0fa" />
            <path d="M4.500 8l3 3 4.500-5" stroke="#fff" strokeWidth="2" />
          </Icon>
          <Icon s={10}><path d="M1 6h3l4-4v12l-4-4H1zM10 6c1 1 1 3 0 4M12 4c2 2 2 6 0 8M14 2c3 3 3 9 0 12" stroke="#dfe4e6" strokeWidth="1.200" /></Icon>
          <Icon s={10}><path d="M3 13c-4-1-3-6 1-6 1-5 8-5 9 0 4 0 4 6 0 6z" fill="#fff" /></Icon>
          <Icon s={9}><path d="M1 15C1 7 7 1 15 1M5 15C5 9 9 5 15 5M9 15c0-3 3-6 6-6M13 15l2-2" stroke="#dfe4e6" strokeWidth="1.500" /></Icon>
          <Icon s={10}>
            <path d="M4 5h10v8H4zM15 7v4M1 2v4h4V2M3 6v8" stroke="#fff" strokeWidth="1.500" />
            <path d="M7 7h5v4H7z" fill="#fff" />
          </Icon>
          <span>ESP</span>
          <Clock>15:26</Clock>
          <Icon s={11}>
            <path d="M0 1h16v11h-4v4l-4-4H0z" fill="#fff" />
            <path d="M3 4.500h10M3 8h10" stroke="#22323b" />
          </Icon>
          <DeskEdge />
        </Tray>
      </Taskbar>
    </Window>
  );
}
